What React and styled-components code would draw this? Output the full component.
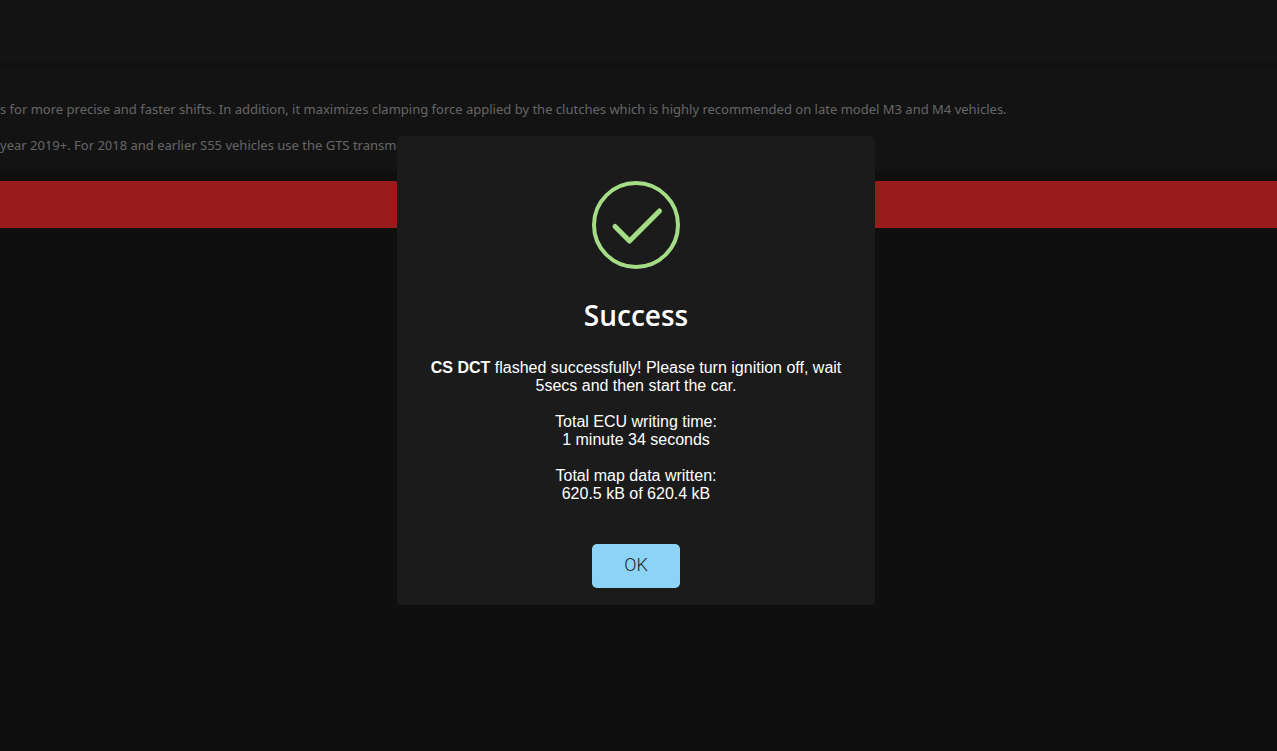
import React from "react";
import styled, { createGlobalStyle } from "styled-components";

const notes = [
  "s for more precise and faster shifts. In addition, it maximizes clamping force applied by the clutches which is highly recommended on late model M3 and M4 vehicles.",
  "year 2019+. For 2018 and earlier S55 vehicles use the GTS transm",
];

const stats = [
  { label: "Total ECU writing time:", value: "1 minute 34 seconds" },
  { label: "Total map data written:", value: "620.5 kB of 620.4 kB" },
];

const App = () => {
  return (
    <>
      <GlobalStyle />
      <Page>
        <TopBar />
        <Notes>
          {notes.map((note) => (
            <Note key={note}>{note}</Note>
          ))}
        </Notes>
        <Banner />
      </Page>
      <Overlay>
        <Modal role="dialog" aria-modal="true" aria-labelledby="modal-title">
          <CheckIcon viewBox="0 0 88 88" aria-hidden="true">
            <circle cx="44" cy="44" r="42" strokeWidth="4" />
            <path
              d="M23 45.5 L37.5 60 L67.5 30"
              strokeWidth="5"
              strokeLinejoin="round"
            />
          </CheckIcon>
          <Title id="modal-title">Success</Title>
          <Message>
            <p>
              <strong>CS DCT</strong> flashed successfully! Please turn ignition
              off, wait 5secs and then start the car.
            </p>
            {stats.map((stat) => (
              <p key={stat.label}>
                {stat.label}
                <br />
                {stat.value}
              </p>
            ))}
          </Message>
          <OkButton type="button">OK</OkButton>
        </Modal>
      </Overlay>
    </>
  );
};

const GlobalStyle = createGlobalStyle`
  * {
    box-sizing: border-box;
  }

  body {
    margin: 0;
    background-color: #191919;
    font-family: "Segoe UI", "Open Sans", sans-serif;
  }

  p, h2 {
    margin: 0;
  }
`;

const Page = styled.main`
  display: flex;
  flex-direction: column;
  min-height: 100vh;
  overflow: hidden;
`;

const TopBar = styled.header`
  height: 63px;
  background-color: #212121;
`;

const Notes = styled.section`
  display: flex;
  flex-direction: column;
  gap: 16px;
  margin-top: 4px;
  padding: 32px 0 16px;
  background-color: #212121;
`;

const Note = styled.p`
  color: #a8a8a8;
  font-family: "Segoe UI", "Noto Sans", sans-serif;
  font-size: 13px;
  line-height: 20px;
  white-space: nowrap;
`;

const Banner = styled.div`
  height: 47px;
  margin-top: 10px;
  background-color: #ff2d2d;
`;

const Overlay = styled.div`
  position: fixed;
  inset: 0;
  display: flex;
  align-items: center;
  justify-content: center;
  padding: 0 5px 10px 0;
  background-color: rgba(0, 0, 0, 0.4);
`;

const Modal = styled.div`
  display: flex;
  flex-direction: column;
  align-items: center;
  width: 478px;
  padding: 45px 20px 17px;
  border-radius: 5px;
  background-color: #1b1b1b;
  color: #ffffff;
  text-align: center;
`;

const CheckIcon = styled.svg`
  width: 88px;
  height: 88px;
  fill: none;
  stroke: #a5dc86;
  stroke-linecap: round;
`;

const Title = styled.h2`
  margin-top: 26px;
  font-size: 28px;
  font-weight: 600;
  line-height: 40px;
`;

const Message = styled.div`
  display: flex;
  flex-direction: column;
  gap: 18px;
  margin-top: 24px;
  font-family: Arial, "Liberation Sans", sans-serif;
  font-size: 16px;
  line-height: 18px;
`;

const OkButton = styled.button`
  width: 88px;
  height: 44px;
  margin-top: 41px;
  padding: 0 0 4px;
  border: none;
  border-radius: 5px;
  background-color: #8cd4f5;
  color: #222222;
  font-family: Roboto, sans-serif;
  font-size: 18px;
  font-weight: 300;
  cursor: pointer;
`;

export default App;
